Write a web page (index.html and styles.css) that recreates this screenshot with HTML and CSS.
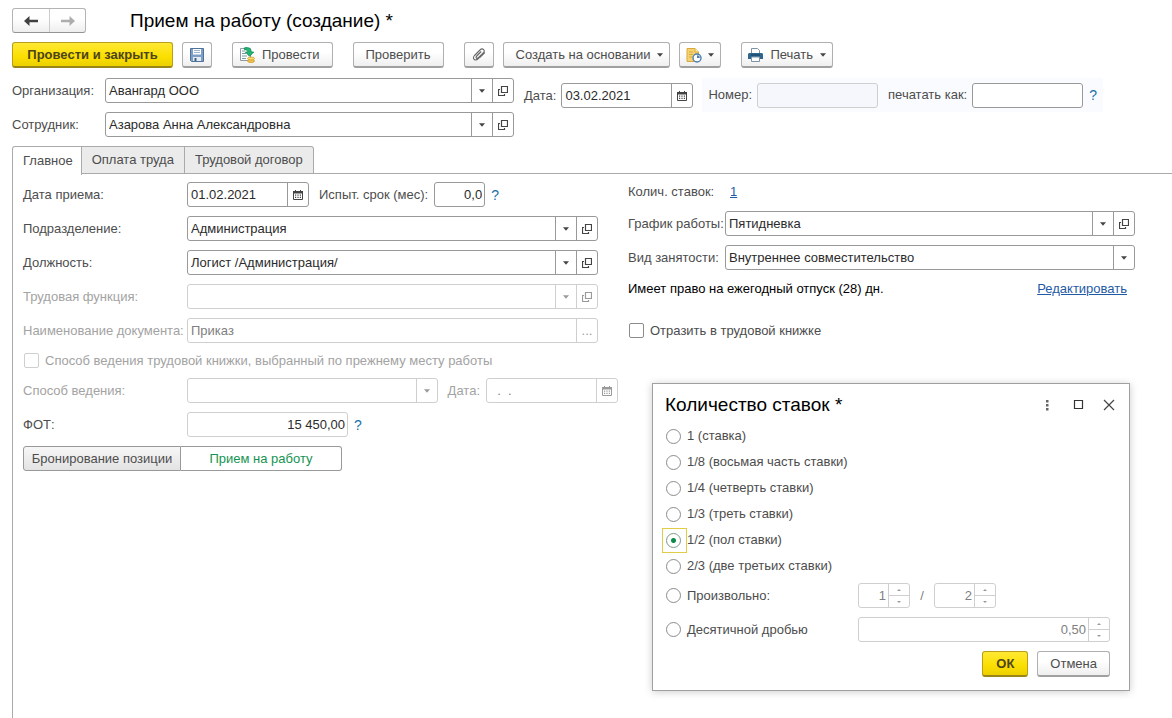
FILE: index.html
```html
<!DOCTYPE html>
<html lang="ru">
<head>
<meta charset="utf-8">
<title>Прием на работу (создание)</title>
<link rel="stylesheet" href="styles.css">
</head>
<body>
<svg class="sprite" aria-hidden="true">
  <symbol id="i-down" viewBox="0 0 7 4"><path d="M0 0h7L3.500 4z" fill="currentColor"/></symbol>
  <symbol id="i-open" viewBox="0 0 10 10"><path d="M3.500.5h6v6h-6zM2 3.500H.5v6h6V8" fill="none" stroke="currentColor" stroke-width="1.200"/></symbol>
  <symbol id="i-cal" viewBox="0 0 10 10"><path d="M.5 1.500h9v8h-9z" fill="none" stroke="currentColor"/><path d="M0 1h10v2.500H0zM2 0h1v2H2zM7 0h1v2H7zM2 4.500h1.200v1.200H2zM4.400 4.500h1.200v1.200H4.400zM6.800 4.500H8v1.200H6.800zM2 6.800h1.200V8H2zM4.400 6.800h1.200V8H4.400zM6.800 6.800H8V8H6.800z" fill="currentColor"/></symbol>
  <symbol id="i-spin-up" viewBox="0 0 4 2"><path d="M0 2h4L2 0z" fill="currentColor"/></symbol>
  <symbol id="i-spin-down" viewBox="0 0 4 2"><path d="M0 0h4L2 2z" fill="currentColor"/></symbol>
</svg>

<main class="page">
  <header class="head">
    <div class="nav">
      <button type="button" class="nav-btn" aria-label="Назад"><svg width="14" height="10" viewBox="0 0 14 10"><path d="M0 5 5.500 0v3.800H14v2.400H5.500V10z" fill="currentColor"/></svg></button>
      <button type="button" class="nav-btn nav-next" aria-label="Вперед"><svg width="14" height="10" viewBox="0 0 14 10"><path d="M14 5 8.500 0v3.800H0v2.400h8.500V10z" fill="currentColor"/></svg></button>
    </div>
    <h1 class="title">Прием на работу (создание) *</h1>
  </header>

  <div class="toolbar">
    <button type="button" class="btn primary main-action">Провести и закрыть</button>
    <button type="button" class="btn icon-btn" aria-label="Записать"><svg width="14" height="14" viewBox="0 0 14 14"><path d="M.5.5h13v13h-12l-1-1z" fill="#7d9fc4" stroke="#4f7299"/><path d="M3 1h8v5.500H3z" fill="#fff"/><path d="M4 2.500h6M4 4.500h6" stroke="#9fb4ca"/><path d="M3 9h8v4H3z" fill="#e6ecf3"/><path d="M4.500 10h2v3h-2z" fill="#3d5f86"/></svg></button>
    <button type="button" class="btn group-start with-icon"><svg width="16" height="16" viewBox="0 0 16 16"><path d="M1.500 1.500h10v12h-10z" fill="#fff" stroke="#8b9aa5"/><path d="M3 4h3M3 6.500h4M3 9h5M3 11.500h4" stroke="#7c99ae"/><path d="M5.500.8c4-.8 6.700.4 6.700 4.200h2.600l-4.300 4.300L6.400 5h2.500c0-1.600-1.200-2.300-3.400-2.300z" fill="#22b573" stroke="#128a54" stroke-width=".8"/><ellipse cx="12" cy="14" rx="3.500" ry="1.500" fill="#f2c84b" stroke="#c8922b" stroke-width=".7"/><ellipse cx="12" cy="11.500" rx="3.500" ry="1.500" fill="#f9da6c" stroke="#c8922b" stroke-width=".7"/></svg>Провести</button>
    <button type="button" class="btn group-start">Проверить</button>
    <button type="button" class="btn icon-btn group-start" aria-label="Файлы"><svg width="14" height="14" viewBox="0 0 14 14"><path d="M11.500 5.500 6.300 10.700C5 12 3.600 12.500 2.300 11.500 1 10.300 1.300 8.800 2.500 7.500L8 2c1.200-1.200 2.700-1.300 3.600-.4s.8 2.200-.3 3.400L6.400 9.700c-.7.700-1.500.8-2 .3s-.4-1.300.3-2l4.500-4.500M12.800 4.500 8 9.300" fill="none" stroke="#666" stroke-width="1.100"/></svg></button>
    <button type="button" class="btn with-arrow">Создать на основании<svg class="down" width="6" height="4"><use href="#i-down"/></svg></button>
    <button type="button" class="btn pic-menu" aria-label="Отчеты"><svg width="16" height="16" viewBox="0 0 16 16"><path d="M1 1.500h8l3.500 3.500v9.500H1z" fill="#f6d272" stroke="#d9a93a"/><path d="M9 1.500V5h3.500" fill="#fff0bd" stroke="#d9a93a"/><path d="M3 5h4M3 7.500h4M3 10h3" stroke="#d9a93a"/><circle cx="11" cy="11" r="4" fill="#fff" stroke="#4c7db0" stroke-width="1.400"/><path d="M11 11V8.200A2.800 2.800 0 0 1 13.800 11z" fill="#4c7db0"/></svg><svg class="down" width="6" height="4"><use href="#i-down"/></svg></button>
    <button type="button" class="btn group-start with-icon with-arrow print"><svg width="15" height="14" viewBox="0 0 15 14"><path d="M3.500.5h6l2 2V6h-8z" fill="#fff" stroke="#7d92a5"/><path d="M1 5h13l1 1v5H0V6z" fill="#2f6690"/><path d="M3 7h9" stroke="#173f60"/><path d="M3.500 9h8v4.500h-8z" fill="#fff" stroke="#7d92a5"/></svg>Печать<svg class="down" width="6" height="4"><use href="#i-down"/></svg></button>
  </div>

  <section class="doc">
    <div class="stack doc-main">
      <div class="row">
        <label class="lbl" for="org">Организация:</label>
        <div class="field grow"><div class="combo"><select id="org"><option>Авангард ООО</option></select><span class="cell"><svg class="down" width="6" height="4"><use href="#i-down"/></svg></span></div><button type="button" class="cell" aria-label="Открыть организацию"><svg width="10" height="10"><use href="#i-open"/></svg></button></div>
      </div>
      <div class="row">
        <label class="lbl" for="emp">Сотрудник:</label>
        <div class="field grow"><div class="combo"><select id="emp"><option>Азарова Анна Александровна</option></select><span class="cell"><svg class="down" width="6" height="4"><use href="#i-down"/></svg></span></div><button type="button" class="cell" aria-label="Открыть сотрудника"><svg width="10" height="10"><use href="#i-open"/></svg></button></div>
      </div>
    </div>
    <div class="row doc-date">
      <label for="docdate">Дата:</label>
      <div class="field date"><input id="docdate" type="text" value="03.02.2021"><button type="button" class="cell" aria-label="Календарь"><svg width="10" height="10"><use href="#i-cal"/></svg></button></div>
    </div>
    <div class="row doc-num">
      <label for="num">Номер:</label>
      <div class="field num off"><input id="num" type="text" disabled></div>
      <label class="print-as" for="printas">печатать как:</label>
      <div class="field printas"><input id="printas" type="text"></div>
      <button type="button" class="help">?</button>
    </div>
  </section>

  <div class="tabs" role="tablist">
    <button type="button" class="tab active" role="tab" aria-selected="true">Главное</button>
    <button type="button" class="tab" role="tab" aria-selected="false">Оплата труда</button>
    <button type="button" class="tab" role="tab" aria-selected="false">Трудовой договор</button>
  </div>

  <section class="panel">
    <div class="stack">
      <div class="row">
        <label class="lbl" for="hire">Дата приема:</label>
        <div class="field day"><input id="hire" type="text" value="01.02.2021"><button type="button" class="cell" aria-label="Календарь"><svg width="10" height="10"><use href="#i-cal"/></svg></button></div>
        <label class="next-lbl" for="trial">Испыт. срок (мес):</label>
        <div class="field trial"><input id="trial" class="right" type="text" value="0,0"></div>
        <button type="button" class="help">?</button>
      </div>
      <div class="row wide">
        <label class="lbl" for="dep">Подразделение:</label>
        <div class="field grow"><div class="combo"><select id="dep"><option>Администрация</option></select><span class="cell"><svg class="down" width="6" height="4"><use href="#i-down"/></svg></span></div><button type="button" class="cell" aria-label="Открыть подразделение"><svg width="10" height="10"><use href="#i-open"/></svg></button></div>
      </div>
      <div class="row wide">
        <label class="lbl" for="pos">Должность:</label>
        <div class="field grow"><div class="combo"><select id="pos"><option>Логист /Администрация/</option></select><span class="cell"><svg class="down" width="6" height="4"><use href="#i-down"/></svg></span></div><button type="button" class="cell" aria-label="Открыть должность"><svg width="10" height="10"><use href="#i-open"/></svg></button></div>
      </div>
      <div class="row wide off">
        <label class="lbl" for="func">Трудовая функция:</label>
        <div class="field grow off"><div class="combo"><select id="func" disabled><option></option></select><span class="cell"><svg class="down" width="6" height="4"><use href="#i-down"/></svg></span></div><button type="button" class="cell" disabled aria-label="Открыть функцию"><svg width="10" height="10"><use href="#i-open"/></svg></button></div>
      </div>
      <div class="row wide off">
        <label class="lbl" for="docname">Наименование документа:</label>
        <div class="field grow off"><input id="docname" type="text" value="Приказ" disabled><button type="button" class="cell" disabled>...</button></div>
      </div>
      <label class="check off"><input type="checkbox" disabled>Способ ведения трудовой книжки, выбранный по прежнему месту работы</label>
      <div class="row off">
        <label class="lbl" for="way">Способ ведения:</label>
        <div class="field grow off"><div class="combo"><select id="way" disabled><option></option></select><span class="cell"><svg class="down" width="6" height="4"><use href="#i-down"/></svg></span></div></div>
        <label class="next-lbl" for="waydate">Дата:</label>
        <div class="field date off"><input id="waydate" type="text" value="  .  ." disabled><button type="button" class="cell" disabled aria-label="Календарь"><svg width="10" height="10"><use href="#i-cal"/></svg></button></div>
      </div>
      <div class="row">
        <label class="lbl" for="fot">ФОТ:</label>
        <div class="field fot"><input id="fot" class="right" type="text" value="15 450,00" readonly></div>
        <button type="button" class="help">?</button>
      </div>
      <div class="switch">
        <button type="button" class="seg">Бронирование позиции</button>
        <button type="button" class="seg on">Прием на работу</button>
      </div>
    </div>

    <div class="stack">
      <div class="row rate"><span class="lbl2">Колич. ставок:</span><a href="#rates">1</a></div>
      <div class="row">
        <label class="lbl2" for="sched">График работы:</label>
        <div class="field grow"><div class="combo"><select id="sched"><option>Пятидневка</option></select><span class="cell"><svg class="down" width="6" height="4"><use href="#i-down"/></svg></span></div><button type="button" class="cell" aria-label="Открыть график"><svg width="10" height="10"><use href="#i-open"/></svg></button></div>
      </div>
      <div class="row">
        <label class="lbl2" for="kind">Вид занятости:</label>
        <div class="field grow"><div class="combo"><select id="kind"><option>Внутреннее совместительство</option></select><span class="cell"><svg class="down" width="6" height="4"><use href="#i-down"/></svg></span></div></div>
      </div>
      <div class="leave"><span>Имеет право на ежегодный отпуск (28) дн.</span><a href="#edit">Редактировать</a></div>
      <label class="check book"><input type="checkbox">Отразить в трудовой книжке</label>
    </div>
  </section>
</main>

<div class="dialog" id="rates" role="dialog" aria-labelledby="dlgtitle">
  <div class="dlg-head">
    <h2 class="dlg-title" id="dlgtitle">Количество ставок *</h2>
    <button type="button" class="dlg-btn" aria-label="Меню"><svg width="12" height="12" viewBox="0 0 12 12"><path d="M5 1h2.500v2.500H5zM5 5h2.500v2.500H5zM5 9h2.500v2.500H5z" fill="#666"/></svg></button>
    <button type="button" class="dlg-btn" aria-label="Развернуть"><svg width="12" height="12" viewBox="0 0 12 12"><path d="M2.500 1.500h8v8h-8z" fill="none" stroke="#333" stroke-width="1.200"/></svg></button>
    <button type="button" class="dlg-btn" aria-label="Закрыть"><svg width="12" height="12" viewBox="0 0 12 12"><path d="M1 1l10 10M11 1 1 11" stroke="#444" stroke-width="1.200"/></svg></button>
  </div>
  <label class="radio"><input type="radio" name="rate">1 (ставка)</label>
  <label class="radio"><input type="radio" name="rate">1/8 (восьмая часть ставки)</label>
  <label class="radio"><input type="radio" name="rate">1/4 (четверть ставки)</label>
  <label class="radio"><input type="radio" name="rate">1/3 (треть ставки)</label>
  <label class="radio"><input type="radio" name="rate" checked>1/2 (пол ставки)</label>
  <label class="radio"><input type="radio" name="rate">2/3 (две третьих ставки)</label>
  <div class="custom">
    <div class="row">
      <label class="radio rate-lbl"><input type="radio" name="rate">Произвольно:</label>
      <div class="field off part"><input class="right" type="text" value="1" aria-label="Числитель" disabled><div class="spin"><button type="button" disabled aria-label="Больше"><svg width="4" height="2"><use href="#i-spin-up"/></svg></button><button type="button" disabled aria-label="Меньше"><svg width="4" height="2"><use href="#i-spin-down"/></svg></button></div></div>
      <span class="slash">/</span>
      <div class="field off part-wide"><input class="right" type="text" value="2" aria-label="Знаменатель" disabled><div class="spin"><button type="button" disabled aria-label="Больше"><svg width="4" height="2"><use href="#i-spin-up"/></svg></button><button type="button" disabled aria-label="Меньше"><svg width="4" height="2"><use href="#i-spin-down"/></svg></button></div></div>
    </div>
    <div class="row">
      <label class="radio rate-lbl"><input type="radio" name="rate">Десятичной дробью</label>
      <div class="field off grow"><input class="right" type="text" value="0,50" aria-label="Десятичная дробь" disabled><div class="spin"><button type="button" disabled aria-label="Больше"><svg width="4" height="2"><use href="#i-spin-up"/></svg></button><button type="button" disabled aria-label="Меньше"><svg width="4" height="2"><use href="#i-spin-down"/></svg></button></div></div>
    </div>
  </div>
  <div class="dlg-foot">
    <button type="button" class="btn primary">ОК</button>
    <button type="button" class="btn">Отмена</button>
  </div>
</div>
</body>
</html>
```

FILE: styles.css
```css
* { box-sizing: border-box; }

html, body { height: 100%; }

body {
  margin: 0;
  background: #fff;
  color: #4d4d4d;
  font-family: "Liberation Sans", Arial, sans-serif;
  font-size: 13px;
  line-height: 16px;
}

button, input, select { font: inherit; color: inherit; margin: 0; }
svg { display: block; flex: none; }
a { color: #1f5aa6; text-decoration: underline; }
.sprite { display: none; }

.page {
  display: flex;
  flex-direction: column;
  min-height: 100%;
  padding: 8px 0 0 12px;
}

/* Title row */
.head { display: flex; align-items: center; gap: 44px; height: 25px; }
.nav {
  display: flex;
  height: 25px;
  border: 1px solid #b4b4b4;
  border-bottom-color: #949494;
  border-radius: 3px;
  background: linear-gradient(#fff 40%, #eee);
}
.nav-btn {
  display: flex;
  align-items: center;
  justify-content: center;
  width: 36px;
  padding: 0;
  border: 0;
  background: none;
  color: #404040;
}
.nav-next { border-left: 1px solid #ccc; color: #adadad; }
.title { margin: 0; font-size: 19px; line-height: 24px; font-weight: 400; color: #000; }

/* Command bar */
.toolbar { display: flex; gap: 9px; margin-top: 9px; }
.btn {
  display: flex;
  align-items: center;
  justify-content: center;
  height: 26px;
  padding: 0 12px;
  border: 1px solid #b0b0b0;
  border-bottom: 2px solid #a0a0a0;
  border-radius: 3px;
  background: linear-gradient(#fff 40%, #efefef);
  white-space: nowrap;
}
.primary {
  padding: 0 13px;
  border-color: #b79f1c;
  border-bottom-color: #9a8617;
  background: linear-gradient(#ffe935, #fbdf00 60%, #ecd000);
  color: #4d4417;
  font-weight: 700;
}
.main-action { min-width: 161px; }
.group-start { margin-left: 11px; }
.icon-btn { width: 30px; padding: 0; }
.with-icon { gap: 7px; padding-left: 6px; }
.with-arrow { gap: 7px; padding-right: 6px; }
.pic-menu { gap: 6px; padding: 0 6px; }
.down { color: #444; }

/* Fields */
.stack { display: flex; flex-direction: column; gap: 9px; min-width: 0; }
.row { display: flex; align-items: center; white-space: nowrap; }
.field {
  display: flex;
  flex: none;
  height: 25px;
  border: 1px solid #999;
  border-radius: 3px;
  background: #fff;
  color: #2b2b2b;
  overflow: hidden;
}
.grow { flex: 1; min-width: 0; }
.field input, .field select {
  flex: 1;
  width: 100%;
  min-width: 0;
  height: 23px;
  padding: 0 3px;
  border: 0;
  outline: 0;
  background: none;
  appearance: none;
}
.field .right { text-align: right; padding-right: 2px; }
.combo { display: grid; flex: 1; min-width: 0; }
.combo > * { grid-area: 1 / 1; }
.combo .cell { justify-self: end; pointer-events: none; }
.cell {
  display: flex;
  flex: none;
  align-items: center;
  justify-content: center;
  width: 21px;
  height: 23px;
  padding: 0;
  border: 0;
  border-left: 1px solid #999;
  background: none;
  color: #444;
}
.off { color: #a3a3a3; }
.field.off { border-color: #cfcfcf; color: #808080; }
.field.off input, .field.off select { color: inherit; opacity: 1; }
.off .cell { border-color: #cfcfcf; color: #9a9a9a; }
.off .down { color: #9a9a9a; }
.help { padding: 0; border: 0; background: none; color: #1a72a8; font-size: 14px; margin-left: 6px; }

/* Document header */
.doc { display: flex; margin-top: 10px; padding-right: 69px; }
.doc-main { flex: 1; }
.doc-main .lbl { width: 93px; }
.doc-date { align-self: flex-start; height: 35px; margin-left: 10px; gap: 5px; }
.date { width: 132px; }
.doc-num {
  align-self: flex-start;
  height: 34px;
  margin-left: 9px;
  padding: 0 6px;
  background: #fafbfe;
}
.num { width: 121px; margin-left: 5px; }
.field.num { background: #f5f7fc; }
.print-as { margin: 0 5px 0 10px; }
.printas { width: 111px; }

/* Tabs */
.tabs { display: flex; margin-top: 9px; }
.tab {
  height: 28px;
  padding: 0 10px;
  border: 1px solid #aaa;
  border-left-width: 0;
  background: #ebebeb;
}
.tab:last-child { border-radius: 0 3px 0 0; }
.tab.active {
  height: 29px;
  margin-bottom: -1px;
  padding: 0 8px 0 10px;
  border-left-width: 1px;
  border-bottom: 0;
  border-radius: 3px 0 0 0;
  background: #fff;
  z-index: 1;
}

.panel {
  display: grid;
  flex: 1;
  grid-template-columns: 595fr 507fr;
  align-items: start;
  gap: 10px;
  margin-top: -1px;
  padding: 8px 37px 8px 10px;
  border: solid #aaa;
  border-width: 1px 0 0 1px;
}
.panel .lbl { width: 164px; }
.wide { margin-right: 20px; }
.day { width: 122px; }
.next-lbl { margin: 0 6px 0 10px; }
.trial { width: 51px; }
.fot { width: 161px; border-color: #cfcfcf; }

.check { display: flex; align-items: center; gap: 6px; height: 17px; white-space: nowrap; }
.check input {
  flex: none;
  width: 15px;
  height: 15px;
  margin-left: 1px;
  border: 1px solid #8c8c8c;
  border-radius: 2px;
  background: #fff;
  appearance: none;
}
.check.off input { border-color: #cfcfcf; }
.check input:checked { background: #159758; }

.switch { display: flex; }
.seg {
  width: 158px;
  height: 25px;
  padding: 0;
  border: 1px solid #999;
  border-radius: 3px 0 0 3px;
  background: linear-gradient(#f7f7f7, #e3e3e3);
}
.seg.on {
  width: 161px;
  border-left: 0;
  border-radius: 0 3px 3px 0;
  background: #fff;
  color: #149450;
}

.lbl2 { width: 97px; }
.rate { gap: 5px; height: 20px; }
.leave {
  display: flex;
  align-items: flex-end;
  justify-content: space-between;
  height: 18px;
  padding-right: 8px;
  color: #000;
  white-space: nowrap;
}
.book { margin-top: 16px; }

/* Dialog */
.dialog {
  position: absolute;
  top: 383px;
  right: 42px;
  width: 478px;
  padding: 0 19px 13px 12px;
  border: 1px solid #a0a0a0;
  background: #fff;
  box-shadow: 0 1px 8px rgba(0, 0, 0, .2);
}
.dlg-head { display: flex; align-items: center; gap: 11px; height: 39px; padding-top: 3px; }
.dlg-title { flex: 1; margin: 0; font-size: 19px; line-height: 24px; font-weight: 400; color: #000; }
.dlg-btn {
  display: flex;
  align-items: center;
  justify-content: center;
  width: 20px;
  height: 20px;
  padding: 0;
  border: 0;
  background: none;
}
.dlg-btn:last-child { margin-right: -9px; }
.radio { display: flex; align-items: center; gap: 6px; height: 26px; }
.radio input {
  flex: none;
  width: 15px;
  height: 15px;
  margin-left: 1px;
  border: 1px solid #8c8c8c;
  border-radius: 50%;
  background: #fff;
  appearance: none;
}
.radio input:checked {
  border-color: #7d9a88;
  background: radial-gradient(circle, #0e8a4b 2px, #fff 3px);
}
/* Square focus frame round the chosen option */
.radio:has(input:checked)::before {
  content: "";
  position: absolute;
  left: 9px;
  width: 23px;
  height: 23px;
  border: 1px solid #e0cd45;
}
.custom { display: flex; flex-direction: column; gap: 9px; margin-top: 4px; }
.rate-lbl { width: 193px; height: 25px; }
.part { width: 52px; }
.part-wide { width: 62px; }
.slash { width: 24px; text-align: center; color: #808080; }
.spin { display: flex; flex: none; flex-direction: column; width: 21px; border-left: 1px solid #cfcfcf; }
.spin button {
  display: flex;
  flex: 1;
  align-items: center;
  justify-content: center;
  padding: 0;
  border: 0;
  background: none;
  color: #9a9a9a;
}
.spin button + button { border-top: 1px solid #cfcfcf; }
.dlg-foot { display: flex; justify-content: flex-end; gap: 9px; margin-top: 9px; }
```
